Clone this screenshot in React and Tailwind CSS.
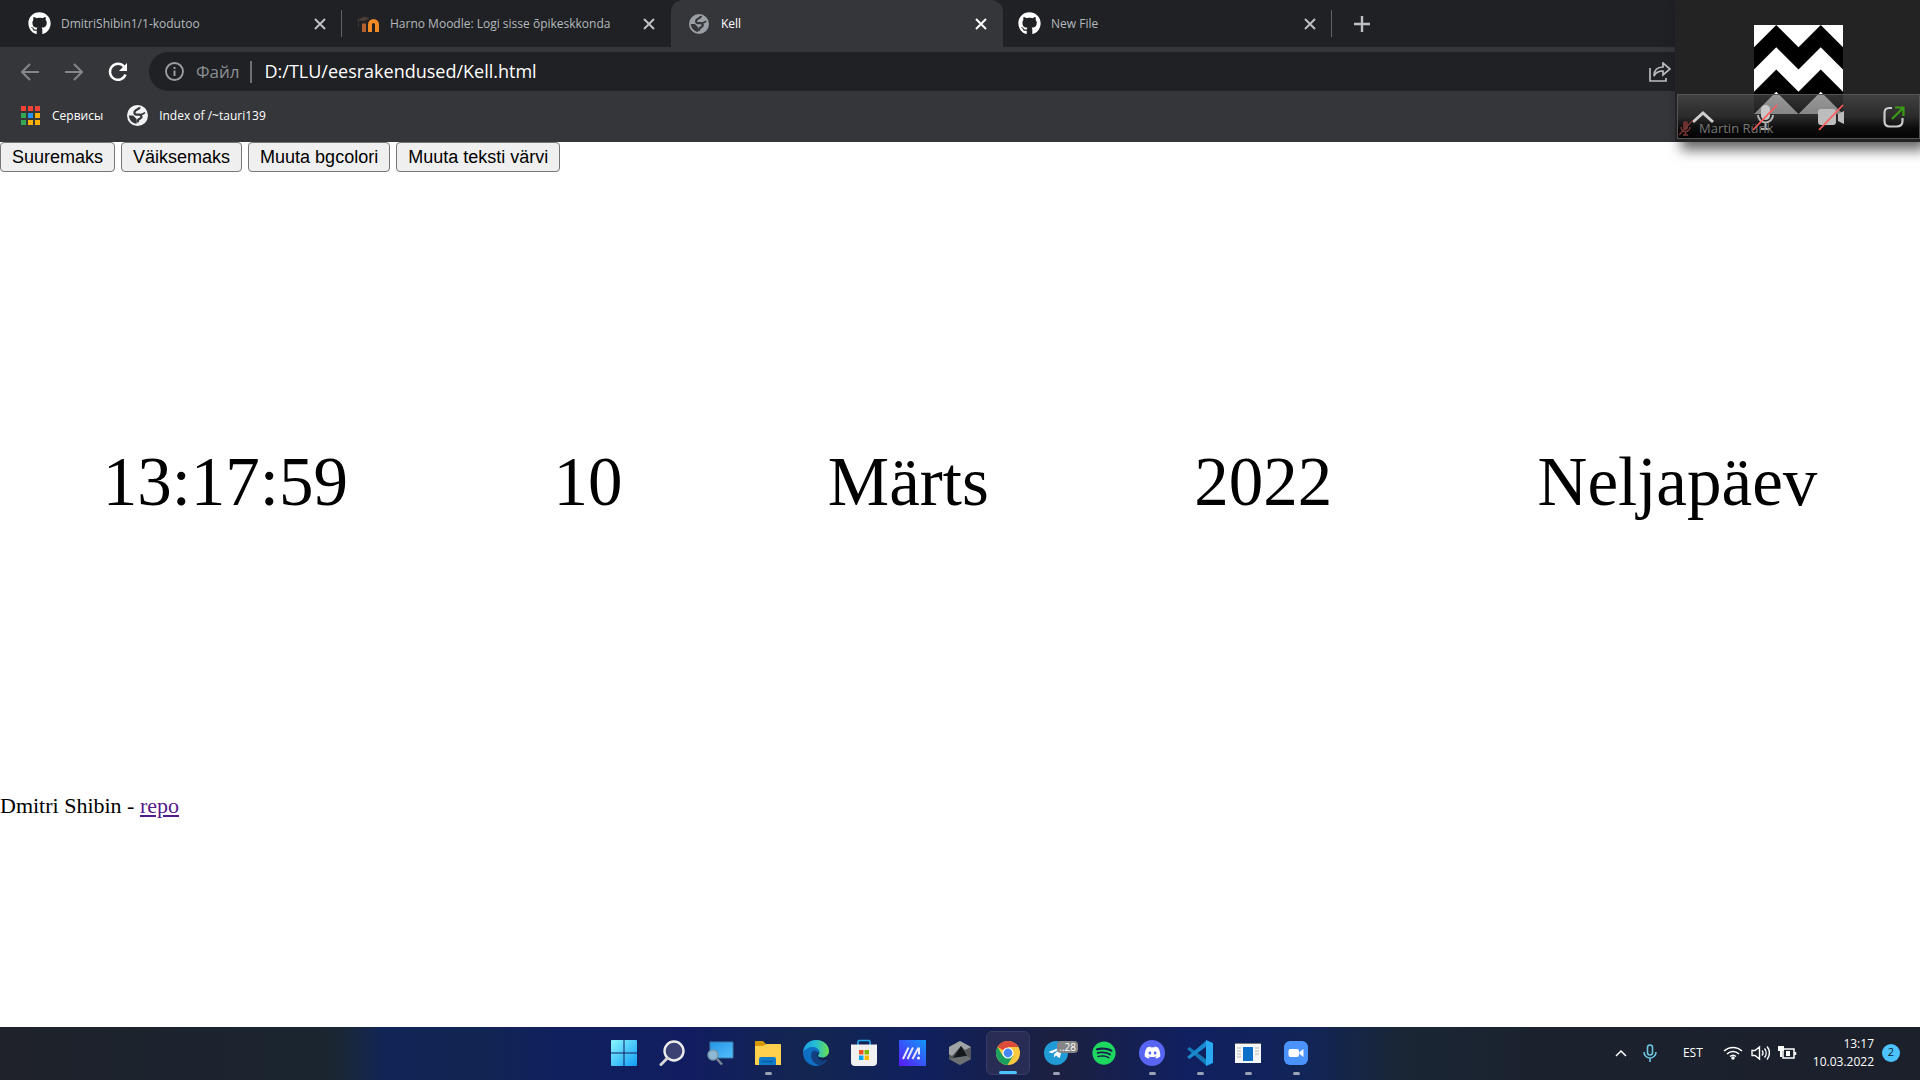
import React from "react";
import { FaGithub, FaSpotify, FaDiscord, FaTelegramPlane } from "react-icons/fa";

const ui = "font-['Open_Sans','Noto_Sans',sans-serif]";

function Close({ active }) {
  return (
    <button aria-label="Close tab" className={active ? "shrink-0 text-white" : "shrink-0 text-[#bdc1c6]"}>
      <svg width="12" height="12" viewBox="0 0 12 12" stroke="currentColor" strokeWidth="2">
        <path d="M1 1l10 10M11 1L1 11" />
      </svg>
    </button>
  );
}

function Globe({ size, color, hole }) {
  return (
    <svg width={size} height={size} viewBox="0 0 24 24">
      <circle cx="12" cy="12" r="12" fill={color} />
      <path d="M14.500 2.500C14 5 11 5 9.500 6.500S8 10.500 10.500 11H14c3 .3 3.500 3.500 1 4.500-2 .8-3 1.500-3 4.500" fill="none" stroke={hole} strokeWidth="2.600" />
      <path d="M2 12h5l4 4v5.500C6 21 2.500 17 2 12z" fill={hole} />
      <path d="M15.500 10.500q3 .5 5-2" fill="none" stroke={hole} strokeWidth="2" />
    </svg>
  );
}

function Moodle() {
  return (
    <svg width="24" height="20" viewBox="0 0 24 20">
      <path d="M1 6l7-3 5 1-5 3zM2.500 7v6" fill="#4d433c" stroke="#40352e" />
      <path d="M8 9.500V18" stroke="#b5602a" strokeWidth="4" />
      <path d="M14 18v-7.500a3.500 3.500 0 0 1 7 0V18" fill="none" stroke="#f08a24" strokeWidth="4" />
    </svg>
  );
}

function Tab({ icon, title, active, divider }) {
  return (
    <div
      role="tab"
      className={
        active
          ? "flex h-full w-[332px] items-center gap-2.5 rounded-t-xl bg-[#35363a] px-4 text-white"
          : "relative flex h-full w-[329px] items-center gap-2.5 pl-[14px] pr-4 text-[#b4b9be]"
      }
    >
      <span className="flex w-6 shrink-0 justify-center">{icon}</span>
      <span className="grow truncate text-[12px]">{title}</span>
      <Close active={active} />
      {divider && <span className="absolute right-0 top-[10px] h-[27px] w-px bg-[#5f6368]" />}
    </div>
  );
}

const pageButton = "rounded-sm border border-[#767676] bg-[#efefef] px-[11px] text-[18px] leading-[28px] text-black";

function TaskItem({ label, children, state }) {
  return (
    <button
      aria-label={label}
      className={
        state === "active"
          ? "relative flex h-11 w-11 items-center justify-center rounded-md border border-[#363c66] bg-[#292d55]"
          : "relative flex h-11 w-11 items-center justify-center"
      }
    >
      {children}
      {state === "open" && <span className="absolute bottom-0 left-[19px] h-[3px] w-[7px] rounded-full bg-[#9ca3b8]" />}
      {state === "active" && <span className="absolute bottom-0 left-3 h-[3px] w-[18px] rounded-full bg-[#4cc2ff]" />}
    </button>
  );
}

function Taskbar() {
  return (
    <footer className="flex h-[53px] shrink-0 items-center bg-[linear-gradient(90deg,#1f222a_0%,#1b232e_10%,#1b2530_17%,#1a2738_18%,#102556_20%,#112552_25%,#10205e_29%,#111d60_36%,#132650_42%,#10205e_48%,#1c2040_55%,#102060_62%,#112558_68%,#1a2635_73%,#1b222e_80%,#1b202b_100%)] px-5 pb-0.5">
      <div className="flex-1" />
      <nav className="flex items-center gap-1">
        <TaskItem label="Start">
          <svg width="26" height="26" viewBox="0 0 26 26">
            <defs><linearGradient id="win" x2="1" y2="1"><stop stopColor="#8af5fd" /><stop offset="1" stopColor="#109df5" /></linearGradient></defs>
            <path fill="url(#win)" d="M0 1q0-1 1-1h11.500v12.500H0zM13.500 0H25q1 0 1 1v11.500H13.500zM0 13.500h12.500V26H1q-1 0-1-1zM13.500 13.500H26V25q0 1-1 1H13.500z" />
          </svg>
        </TaskItem>
        <TaskItem label="Search">
          <svg width="26" height="26" viewBox="0 0 26 26"><circle cx="15" cy="11" r="9.500" fill="#3b4273" stroke="#ececec" strokeWidth="2.400" /><path d="M8.500 18L2 24.500" stroke="#d5d5d5" strokeWidth="3" strokeLinecap="round" /></svg>
        </TaskItem>
        <TaskItem label="Remote desktop">
          <svg width="28" height="26" viewBox="0 0 28 26"><defs><linearGradient id="desk" x2="1" y2="1"><stop stopColor="#2595e6" /><stop offset="1" stopColor="#54bdfa" /></linearGradient></defs><path fill="url(#desk)" stroke="#397caa" d="M4 2h23v16H4z" /><circle cx="7" cy="15" r="5" fill="#8db7d2" stroke="#7797ab" strokeWidth="1.500" /><path d="M11 19l5 5.500" stroke="#7a8794" strokeWidth="2.500" /></svg>
        </TaskItem>
        <TaskItem label="File Explorer" state="open">
          <svg width="28" height="26" viewBox="0 0 28 26"><path d="M1 2q0-1 1-1h7l3 3h-1v4H1z" fill="#d99800" /><path d="M1 6h8l3-2h14q1 0 1 1v20H2q-1 0-1-1z" fill="#ffd04e" /><path d="M5 25v-6q0-2 2-2h13q2 0 2 2v6z" fill="#127bc9" /><path d="M8 21.500h11" stroke="#075da5" strokeWidth="1.500" /></svg>
        </TaskItem>
        <TaskItem label="Edge">
          <svg width="26" height="26" viewBox="0 0 26 26"><defs><linearGradient id="edge" x2="1"><stop stopColor="#1a9fe0" /><stop offset=".5" stopColor="#26bfd2" /><stop offset="1" stopColor="#6be04d" /></linearGradient></defs><path d="M13 0a13 13 0 1 0 11 20c-5 2.500-10 0-10-5 0-1 .5-2 1-2.500L26 10C25 4 20 0 13 0z" fill="#0f6fc2" /><path d="M9 12c-3 6 2 13 8 13 3-.5 5.500-2.500 7-5-5 2.500-10 0-10-5 0-1 .5-2 1-2.500-1.500-2-4-2.500-6-.5z" fill="#123f80" /><path d="M0 12C1 4 7 0 13 0c8 0 13 5.500 13 11 0 4-3 6.500-6.500 6.500-3 0-4.500-1-4.500-2s1.500-1.500 1.500-3.500c0-3-3.500-5-7-5S2 9 0 12z" fill="url(#edge)" /></svg>
        </TaskItem>
        <TaskItem label="Microsoft Store">
          <svg width="26" height="28" viewBox="0 0 26 28"><path d="M7 7V3q0-1.500 1.500-1.500h9q1.500 0 1.500 1.500v4" fill="none" stroke="#28a8ea" strokeWidth="1.600" /><path d="M0 5.500h26V23q0 4-4 4H4q-4 0-4-4z" fill="#f1f1f1" /><path d="M8 11h4.500v4.500H8z" fill="#f25022" /><path d="M13.500 11H18v4.500h-4.500z" fill="#7fba00" /><path d="M8 16.500h4.500V21H8z" fill="#00a4ef" /><path d="M13.500 16.500H18V21h-4.500z" fill="#ffb900" /></svg>
        </TaskItem>
        <TaskItem label="MyASUS">
          <svg width="27" height="26" viewBox="0 0 27 26"><defs><linearGradient id="arm" x1="0" y1="1" x2="1" y2="0"><stop stopColor="#5a18f5" /><stop offset="1" stopColor="#1198fb" /></linearGradient></defs><path fill="url(#arm)" d="M0 0h27v26H0z" /><path d="M4 19L9.500 7.500M8.500 19L14 7.500M13.500 19L19 8.500h1v6" fill="none" stroke="#e8e9ff" strokeWidth="2" /><circle cx="19.500" cy="18" r="1.500" fill="#fff" /></svg>
        </TaskItem>
        <TaskItem label="Armoury Crate">
          <svg width="24" height="26" viewBox="0 0 24 26"><path d="M12 1l11 6v12l-11 6-11-6V7z" fill="#54585c" /><path d="M12 1l11 6-6 3-4-4-9 10-3-2V7z" fill="#a0a4a6" /><path d="M13 6l6 10-14 2z" fill="#15191c" /><path d="M5 18l14-2 4 3-11 6-11-6z" fill="#6d7174" /></svg>
        </TaskItem>
        <TaskItem label="Chrome" state="active">
          <svg width="24" height="24" viewBox="0 0 24 24">
            <circle cx="12" cy="12" r="12" fill="#fbc940" />
            <path d="M12 12L1.600 6A12 12 0 0 1 22.400 6H12z" fill="#dd4b3b" />
            <path d="M1.600 6A12 12 0 0 0 11.500 24L17 15l-5-3-5 3z" fill="#1aa15f" />
            <circle cx="12" cy="12" r="5.600" fill="#fff" /><circle cx="12" cy="12" r="4.400" fill="#4688f1" />
          </svg>
        </TaskItem>
        <TaskItem label="Telegram" state="open">
          <span className="flex h-6 w-6 items-center justify-center rounded-full bg-[#209bd5]"><FaTelegramPlane className="mr-0.5" size={15} color="white" /></span>
          <span className="absolute right-0 top-[10px] rounded-sm bg-[#858585] px-0.5 text-[10px] leading-[12px] text-white">..28</span>
        </TaskItem>
        <TaskItem label="Spotify"><FaSpotify size={24} color="#1ed760" /></TaskItem>
        <TaskItem label="Discord" state="open"><span className="flex h-[26px] w-[26px] items-center justify-center rounded-full bg-[#5865f2]"><FaDiscord size={17} color="white" /></span></TaskItem>
        <TaskItem label="Visual Studio Code" state="open">
          <svg width="26" height="26" viewBox="0 0 26 26"><path d="M0 9l2.500-2L20 20v6z" fill="#1479b8" /><path d="M0 17l2.500 2L20 6V0z" fill="#1a8ad0" /><path d="M19 0l7 3v20l-7 3z" fill="#29a9f2" /></svg>
        </TaskItem>
        <TaskItem label="Window" state="open">
          <svg width="26" height="20" viewBox="0 0 26 20"><path d="M0 0h26v20H0z" fill="#f7f7f7" /><path d="M0 .5h26" stroke="#777" /><path d="M8 4h10v14H8z" fill="#0b70c8" /><path d="M2 5h4M2 8h4M2 11h4M2 14h4M20 5h4M20 8h4M20 11h4" stroke="#b9b9b9" /></svg>
        </TaskItem>
        <TaskItem label="Zoom" state="open">
          <svg width="24" height="24" viewBox="0 0 24 24"><rect width="24" height="24" rx="6" fill="#4a93fb" /><rect x="4.500" y="8" width="10.500" height="8" rx="2" fill="#fff" /><path d="M15.500 11l4-3v8l-4-3z" fill="#fff" /></svg>
        </TaskItem>
      </nav>
      <div className="flex flex-1 items-center justify-end text-[12px] text-white">
        <svg className="mr-4" width="12" height="8" viewBox="0 0 12 8" fill="none" stroke="#fff" strokeWidth="1.500"><path d="M1 7l5-5 5 5" /></svg>
        <svg className="mr-[26px]" width="14" height="18" viewBox="0 0 14 18" fill="none" stroke="#6fc4df" strokeWidth="1.600"><rect x="4.500" y="1" width="5" height="10" rx="2.500" /><path d="M1 8a6 6 0 0 0 12 0M7 14v4" /></svg>
        <span className="mr-5">EST</span>
        <svg className="mr-2" width="20" height="15" viewBox="0 0 20 15" fill="none" stroke="#fff" strokeWidth="1.500"><path d="M1 6a13 13 0 0 1 18 0M4 9a8.500 8.500 0 0 1 12 0M7 11.500a4.500 4.500 0 0 1 6 0" /><circle cx="10" cy="13" r="1" fill="#fff" /></svg>
        <svg className="mr-2" width="19" height="16" viewBox="0 0 19 16" fill="none" stroke="#fff" strokeWidth="1.400"><path d="M1 5.500h3L8.500 2v12L4 10.500H1zM11 5.500a4 4 0 0 1 0 5M13.500 3.500a7 7 0 0 1 0 9M16 1.500a10 10 0 0 1 0 13" /></svg>
        <svg className="mr-4" width="19" height="15" viewBox="0 0 19 15"><path d="M5 4h11v9H5zM17.500 7v3" fill="none" stroke="#fff" strokeWidth="1.500" /><path d="M8 6h4v5H8zM0 1h6v5H4v6H2V6H0z" fill="#fff" /></svg>
        <time className="mr-2 text-right leading-[18px]">13:17<br />10.03.2022</time>
        <span className="flex h-[18px] w-[18px] items-center justify-center rounded-full bg-[#4cc2ff] text-[11px] text-[#10202c]">2</span>
      </div>
    </footer>
  );
}

function CallOverlay() {
  return (
    <aside className="absolute right-0 top-0 h-[142px] w-[245px] bg-[#232323] shadow-[6px_8px_12px_rgba(0,0,0,0.6)]">
      <svg className="absolute left-[79px] top-[25px]" width="89" height="89" viewBox="0 0 88 88">
        <path d="M0 0h88v88H0z" fill="#fff" />
        <path d="M0 22L22 0l22 22L66 0l22 22v22L66 22 44 44 22 22 0 44zM0 66l22-22 22 22 22-22 22 22v22L66 66 44 88 22 66 0 88z" fill="#000" />
      </svg>
      <div className="absolute bottom-[3px] left-0.5 right-0 flex h-[45px] items-center justify-between border border-[#555] bg-linear-to-b from-[#555]/60 via-[#303030]/60 to-black/85 px-[14px]">
        <button aria-label="Collapse"><svg width="22" height="14" viewBox="0 0 22 14" fill="none" stroke="#cfcfcf" strokeWidth="3"><path d="M1 12L11 3l10 9" /></svg></button>
        <button aria-label="Unmute"><svg width="26" height="28" viewBox="0 0 26 28"><rect x="9" y="2" width="9" height="15" rx="4.500" fill="#c9c9c9" /><path d="M6 12a7.500 7.500 0 0 0 15 0M13.500 20v5M9 26h9" fill="none" stroke="#b5b5b5" strokeWidth="2" /><path d="M1 27L25 2" stroke="#ff5a5a" strokeWidth="1.800" /></svg></button>
        <button aria-label="Start video"><svg width="28" height="28" viewBox="0 0 28 28"><rect x="1" y="6" width="18" height="16" rx="3" fill="#bdbdbd" /><path d="M21 11l6-3v13l-6-3z" fill="#bdbdbd" /><path d="M2 27L26 2" stroke="#ff5a5a" strokeWidth="1.800" /></svg></button>
        <button aria-label="Open window"><svg width="22" height="22" viewBox="0 0 22 22" fill="none" strokeWidth="2.200"><path d="M9 2H6Q1.500 2 1.500 7v8q0 5.500 5 5.500h7q6 0 6-5.500v-3" stroke="#c9c9c9" /><path d="M9 13L20 2M12 1.500h8.500V10" stroke="#3b9b14" /></svg></button>
      </div>
      <div className="absolute bottom-1 left-1 flex items-center gap-1.5 text-[13px] leading-[20px] text-[#757575]">
        <svg width="14" height="16" viewBox="0 0 14 16"><rect x="4" y="1" width="5" height="9" rx="2.500" fill="#6b2f2f" /><path d="M2 7a4.500 4.500 0 0 0 9 0M6.500 12v3M4 15h5M0 15L14 0" fill="none" stroke="#793535" strokeWidth="1.500" /></svg>
        Martin Rünk
      </div>
    </aside>
  );
}

export default function App() {
  return (
    <div className={`relative flex min-h-screen flex-col bg-white ${ui}`}>
      <header className="h-[142px] shrink-0 bg-[#35363a]">
        <div className="flex h-[47px] items-center bg-[#202124] pl-[13px]" role="tablist">
          <Tab icon={<FaGithub size={23} color="#fff" />} title="DmitriShibin1/1-kodutoo" divider />
          <Tab icon={<Moodle />} title="Harno Moodle: Logi sisse õpikeskkonda" />
          <Tab icon={<Globe size={20} color="#9aa0a6" hole="#35363a" />} title="Kell" active />
          <Tab icon={<FaGithub size={23} color="#fff" />} title="New File" divider />
          <button aria-label="New tab" className="ml-[21px]"><svg width="18" height="18" viewBox="0 0 18 18" stroke="#bdc1c6" strokeWidth="2.400"><path d="M9 1v16M1 9h16" /></svg></button>
        </div>
        <div className="flex items-center gap-6 pl-5 pt-[5px]">
          <button aria-label="Back"><svg width="20" height="18" viewBox="0 0 20 18" fill="none" stroke="#85878a" strokeWidth="2"><path d="M19 9H2M10 1L2 9l8 8" /></svg></button>
          <button aria-label="Forward"><svg width="20" height="18" viewBox="0 0 20 18" fill="none" stroke="#85878a" strokeWidth="2"><path d="M1 9h17M10 1l8 8-8 8" /></svg></button>
          <button aria-label="Reload"><svg width="20" height="20" viewBox="0 0 20 20"><path d="M17.500 12.500A8 8 0 1 1 16 4.500" fill="none" stroke="#fff" strokeWidth="2.400" /><path d="M19 1v8h-8z" fill="#fff" /></svg></button>
          <div className="-ml-[3px] flex h-[39px] grow items-center rounded-l-full bg-[#202124] pl-4">
            <svg width="19" height="19" viewBox="0 0 19 19"><circle cx="9.500" cy="9.500" r="8.500" fill="none" stroke="#9aa0a6" strokeWidth="1.800" /><path d="M9.500 8.500V14M9.500 5v2" stroke="#9aa0a6" strokeWidth="1.900" /></svg>
            <span className="ml-3 mr-2.5 text-[17px] text-[#8b9095]">Файл</span>
            <span className="h-[22px] w-0.5 bg-[#6d7074]" />
            <input aria-label="Address" className="ml-[13px] grow bg-transparent text-[18px] text-white outline-none" defaultValue="D:/TLU/eesrakendused/Kell.html" />
            <button aria-label="Share" className="mr-[249px]"><svg width="22" height="20" viewBox="0 0 22 20" fill="none" stroke="#b8bcc0" strokeWidth="1.700"><path d="M1 6v13h16v-3M5 14c0-6 3-9 9-9V1l7 6-7 6V9c-4 0-7 1-9 5z" /></svg></button>
          </div>
        </div>
        <div className="flex h-[49px] items-center pl-[21px] text-[12px] text-white">
          <span className="mr-3 grid grid-cols-3 gap-0.5">
            {["bg-[#f44336]", "bg-[#f44336]", "bg-[#f44336]", "bg-[#34a853]", "bg-[#2196f3]", "bg-[#fbb000]", "bg-[#34a853]", "bg-[#fbb000]", "bg-[#fbb000]"].map((c, i) => <i key={i} className={`h-[5px] w-[5px] ${c}`} />)}
          </span>
          <a href="#apps" className="mr-6">Сервисы</a>
          <Globe size={21} color="#f1f3f4" hole="#35363a" />
          <a href="#index" className="ml-[11px]">Index of /~tauri139</a>
        </div>
      </header>
      <main className="flex grow flex-col font-['Liberation_Serif',serif] text-[22px] text-black">
        <div className="flex gap-1.5 font-['Liberation_Sans',sans-serif]">
          <button className={pageButton}>Suuremaks</button>
          <button className={pageButton}>Väiksemaks</button>
          <button className={pageButton}>Muuta bgcolori</button>
          <button className={pageButton}>Muuta teksti värvi</button>
        </div>
        <section className="flex h-[622px] items-center justify-around text-[69px]">
          <span>13:17:59</span>
          <span>10</span>
          <span>Märts</span>
          <span>2022</span>
          <span>Neljapäev</span>
        </section>
        <p className="leading-[24px]">Dmitri Shibin - <a href="#repo" className="text-[#551a8b] underline">repo</a></p>
      </main>
      <Taskbar />
      <CallOverlay />
    </div>
  );
}
